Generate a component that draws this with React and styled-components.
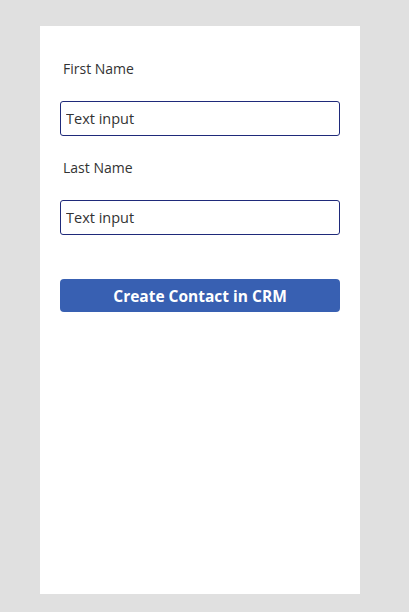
import React from 'react';
import styled, { createGlobalStyle } from 'styled-components';

const GlobalStyle = createGlobalStyle`
  html, body {
    margin: 0;
    padding: 0;
    background: #e0e0e0;
  }
  body {
    font-family: "Open Sans", "Noto Sans", sans-serif;
  }
`;

const Page = styled.div`
  width: 409px;
  height: 612px;
  padding: 26px 49px 18px 40px;
  box-sizing: border-box;
`;

const Card = styled.div`
  height: 100%;
  background: #ffffff;
  padding: 33px 20px 0 20px;
  box-sizing: border-box;
  display: flex;
  flex-direction: column;
`;

const Label = styled.label`
  display: block;
  height: 20px;
  line-height: 20px;
  padding-left: 3px;
  font-size: 14px;
  color: #333333;
  margin-bottom: ${props => props.gap}px;
`;

const Input = styled.input`
  display: block;
  width: 100%;
  height: 35px;
  box-sizing: border-box;
  border: 1px solid #1f2a7a;
  border-radius: 3px;
  padding: 0 5px;
  font-family: "Open Sans", "Noto Sans", sans-serif;
  font-size: 14.5px;
  color: #333333;
  background: #ffffff;
  outline: none;
  margin-bottom: ${props => props.gap}px;

  &::placeholder {
    color: #333333;
  }
`;

const Button = styled.button`
  display: block;
  width: 100%;
  height: 33px;
  border: none;
  border-radius: 4px;
  background: #3860b2;
  color: #ffffff;
  font-family: "Open Sans", "Noto Sans", sans-serif;
  font-weight: 700;
  font-size: 15.5px;
  cursor: pointer;
`;

const fields = [
  { name: 'First Name', after: 22 },
  { name: 'Last Name', after: 44 }
];

const App = () => (
  <>
    <GlobalStyle />
    <Page>
      <Card>
        {fields.map(({ name, after }) => (
          <div key={name}>
            <Label gap={22}>{name}</Label>
            <Input placeholder="Text input" gap={after} />
          </div>
        ))}
        <Button>Create Contact in CRM</Button>
      </Card>
    </Page>
  </>
);

export default App;
